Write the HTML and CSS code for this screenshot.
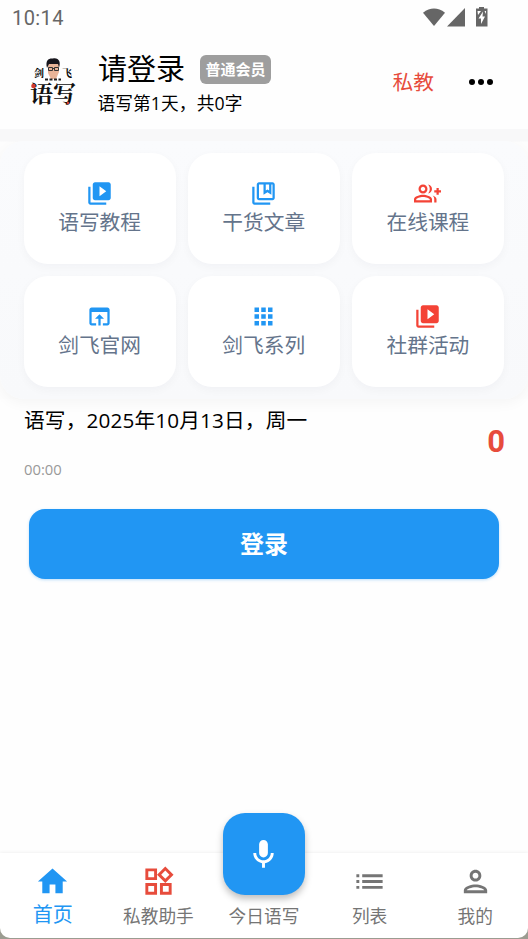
FILE: index.html
```html
<!DOCTYPE html>
<html lang="zh-CN">
<head>
<meta charset="utf-8">
<title>语写</title>
<link rel="stylesheet" href="styles.css">
</head>
<body>
<div class="app">
  <div class="status">
    <span class="clock">10:14</span>
    <svg class="status-icons" viewBox="0 0 66 20" width="66" height="20">
      <path d="M0 4.8Q11 -3.6 22 4.8L11 18z"/><path d="M42 0v18.500H24z"/>
      <path d="M56 -1h5v1.500h3.500v18H53V.5h3z"/>
      <path class="bolt" d="M60 3.500l-4.500 7h2.500V16l4-7.500h-2.500zM54.500 3h3.500L55 7zM61.500 3H63v3z"/>
    </svg>
  </div>
  <header class="header">
    <div class="logo">
      <div class="logo-top">
        <span>剑</span>
        <svg viewBox="0 0 18 24" width="18" height="24">
          <path fill="#e8b498" d="M4 8c0-6 11-6 11 0v6l-3 7H7l-3-6z"/>
          <path fill="#17151c" d="M3 10C1 2 5 0 9 .5c6-1 8 4 6 9L14 6 5 6z"/>
          <path fill="none" stroke="#333" stroke-width="1" d="M4.500 9.500h4v3h-4zm6 0h4v3h-4zm-2 1h2"/>
          <path fill="none" stroke="#222" stroke-width="2" stroke-dasharray="3 1.500" d="M1 21.500h16"/>
        </svg>
        <span>飞</span>
      </div>
      <div class="logo-name">语写</div>
      <svg class="logo-dots" viewBox="0 0 46 26" width="46" height="26"><circle cx="3.500" cy="3" r="2.300"/><circle cx="38" cy="20" r="1.300"/></svg>
    </div>
    <div class="user">
      <div class="user-line"><span class="user-name">请登录</span><span class="badge">普通会员</span></div>
      <div class="user-days">语写第1天，共0字</div>
    </div>
    <span class="coach">私教</span>
    <svg class="more" viewBox="0 0 24 6" width="24" height="6"><circle cx="3" cy="3" r="3"/><circle cx="12" cy="3" r="3"/><circle cx="21" cy="3" r="3"/></svg>
  </header>
  <div class="band">
  <section class="panel">
    <div class="card"><svg class="ico" viewBox="0 0 24 24"><path d="M4 6H2v14c0 1.1.9 2 2 2h14v-2H4V6zm16-4H8c-1.100 0-2 .9-2 2v12c0 1.100.9 2 2 2h12c1.100 0 2-.9 2-2V4c0-1.100-.9-2-2-2zm-8 12.500v-9l6 4.500-6 4.500z"/></svg><span>语写教程</span></div>
    <div class="card"><svg class="ico" viewBox="0 0 24 24"><path fill-rule="evenodd" d="M4 6H2v14c0 1.100.9 2 2 2h14v-2H4zM20 2H8c-1.100 0-2 .9-2 2v12c0 1.100.9 2 2 2h12c1.100 0 2-.9 2-2V4c0-1.100-.9-2-2-2zM8 16V4h4v9l3.500-2.200L19 13V4h1v12zM14 4h3v5.400l-1.500-1-1.500 1z"/></svg><span>干货文章</span></div>
    <div class="card"><svg class="ico red" viewBox="0 0 24 24"><path d="M22 9V7h-2v2h-2v2h2v2h2v-2h2V9zM8 12c2.210 0 4-1.790 4-4s-1.790-4-4-4-4 1.790-4 4 1.790 4 4 4zm0-6c1.100 0 2 .9 2 2s-.9 2-2 2-2-.9-2-2 .9-2 2-2zm0 7c-2.670 0-8 1.340-8 4v3h16v-3c0-2.660-5.330-4-8-4zm6 5H2v-.990C2.200 16.290 5.300 15 8 15s5.800 1.290 6 2v1zM12.510 4.050C13.430 5.110 14 6.490 14 8s-.57 2.890-1.490 3.950C14.470 11.700 16 10.040 16 8s-1.530-3.700-3.490-3.950zm4.020 9.780C17.420 14.660 18 15.700 18 17v3h2v-3c0-1.450-1.590-2.510-3.470-3.170z"/></svg><span>在线课程</span></div>
    <div class="card"><svg class="ico" viewBox="0 0 24 24"><path d="M19 4H5c-1.110 0-2 .9-2 2v12c0 1.100.89 2 2 2h4v-2H5V8h14v10h-4v2h4c1.100 0 2-.9 2-2V6c0-1.100-.89-2-2-2zm-7 6l-4 4h3v6h2v-6h3l-4-4z"/></svg><span>剑飞官网</span></div>
    <div class="card"><svg class="ico" viewBox="0 0 24 24"><path d="M4 8h4V4H4zm6 12h4v-4h-4zm-6 0h4v-4H4zm0-6h4v-4H4zm6 0h4v-4h-4zm6-10v4h4V4zm-6 4h4V4h-4zm6 6h4v-4h-4zm0 6h4v-4h-4z"/></svg><span>剑飞系列</span></div>
    <div class="card"><svg class="ico red" viewBox="0 0 24 24"><path d="M4 6H2v14c0 1.100.9 2 2 2h14v-2H4V6zm16-4H8c-1.100 0-2 .9-2 2v12c0 1.100.9 2 2 2h12c1.100 0 2-.9 2-2V4c0-1.100-.9-2-2-2zm-8 12.500v-9l6 4.500-6 4.500z"/></svg><span>社群活动</span></div>
  </section>
  </div>
  <section class="today">
    <div><div class="date">语写，2025年10月13日，周一</div><div class="time">00:00</div></div>
    <div class="count">0</div>
  </section>
  <button class="login">登录</button>
  <div class="bottom">
  <nav class="nav">
    <div class="tab active"><svg viewBox="0 0 24 24"><path d="M10 20v-6h4v6h5v-8h3L12 3 2 12h3v8z"/></svg><span>首页</span></div>
    <div class="tab coach-tab"><svg viewBox="0 0 24 24"><path d="M16.660 4.520l2.830 2.830-2.830 2.830-2.830-2.830 2.830-2.830M9 5v4H5V5h4m10 10v4h-4v-4h4M9 15v4H5v-4h4m7.660-13.310L11 7.340 16.660 13l5.660-5.660-5.660-5.650zM11 3H3v8h8V3zm10 10h-8v8h8v-8zm-10 0H3v8h8v-8z"/></svg><span>私教助手</span></div>
    <div class="tab mic-tab"><div class="fab"><svg viewBox="0 0 24 24"><path d="M12 14c1.660 0 3-1.340 3-3V5c0-1.660-1.340-3-3-3S9 3.340 9 5v6c0 1.660 1.340 3 3 3zm5-3c0 2.760-2.240 5-5 5s-5-2.240-5-5H5c0 3.530 2.610 6.430 6 6.920V21h2v-3.080c3.390-.49 6-3.390 6-6.920h-2z"/></svg></div><span>今日语写</span></div>
    <div class="tab"><svg viewBox="0 0 24 24"><path d="M3 13h2v-2H3zm0 4h2v-2H3zm0-8h2V7H3zm4 4h14v-2H7zm0 4h14v-2H7zM7 7v2h14V7z"/></svg><span>列表</span></div>
    <div class="tab"><svg viewBox="0 0 24 24"><path d="M12 6c1.100 0 2 .9 2 2s-.9 2-2 2-2-.9-2-2 .9-2 2-2m0 10c2.700 0 5.800 1.290 6 2H6c.23-.72 3.310-2 6-2m0-12C9.790 4 8 5.790 8 8s1.790 4 4 4 4-1.790 4-4-1.790-4-4-4zm0 10c-2.670 0-8 1.340-8 4v2h16v-2c0-2.660-5.330-4-8-4z"/></svg><span>我的</span></div>
  </nav>
  </div>
</div>
</body>
</html>
```
FILE: styles.css
```css
* { box-sizing: border-box; }
body { margin: 0; background: #fefefe; color: #000; font-family: "Open Sans", "Noto Sans CJK SC", sans-serif; font-weight: 375; }
svg { display: block; flex: none; fill: currentColor; overflow: visible; }
.app { width: 528px; height: 939px; display: flex; flex-direction: column; overflow: hidden; }
.status { height: 36px; display: flex; justify-content: space-between; align-items: center; padding: 0 39px 0 12px; color: #666; }
.status-icons { margin-top: -1px; }
.clock { font: 400 20px/36px Roboto, sans-serif; letter-spacing: .4px; }
.bolt { fill: #fff; }
.header { height: 93px; display: flex; align-items: center; padding: 0 35px 0 30px; }
.logo { position: relative; width: 46px; align-self: flex-start; margin-top: 22px; font-family: "Noto Serif CJK SC", "Noto Sans CJK SC", serif; }
.logo-dots { position: absolute; left: 0; top: 25px; fill: #d33a2c; }
.logo-top { display: flex; align-items: flex-start; justify-content: center; height: 22px; font-size: 10px; line-height: 11px; font-weight: bold; }
.logo-top span { padding-top: 9px; }
.logo-name { font-size: 23px; line-height: 24px; margin-top: 1px; font-weight: 700; color: #111; }
.user { margin-left: 22px; flex: 1; align-self: flex-start; }
.user-line { display: flex; align-items: center; height: 44px; margin-top: 11px; }
.user-name { font-size: 29px; line-height: 44px; }
.badge { margin: 1px 0 0 15px; width: 71px; height: 29px; border-radius: 6px; background: #9e9e9e; color: #fff; font-size: 15px; font-weight: 700; line-height: 28px; text-align: center; white-space: nowrap; }
.user-days { font-size: 17.700px; line-height: 25px; margin-left: -.5px; letter-spacing: .1px; }
.coach { color: #e74c3c; font-size: 20.700px; line-height: 30px; margin: -2px 35px 0 0; }
.more { margin-top: -1px; }
.band { background: linear-gradient(#f8f8f9 12px, #fdfdfd 13px, #fdfdfd 100%); padding-top: 12px; }
.panel { height: 258px; border-radius: 24px; background: linear-gradient(#fafbfd, #f8f9fb); box-shadow: 0 4px 14px rgba(0,0,0,.04); padding: 12px 24px 12px 23.500px; display: grid; grid-template-columns: repeat(3, 1fr); grid-template-rows: 111px 111px; gap: 12px; clip-path: inset(0 0 -20px 0); }
.card { background: #fff; border-radius: 24px; box-shadow: 0 3px 10px rgba(30,40,60,.035); display: flex; flex-direction: column; align-items: center; padding-top: 27px; color: #64748b; font-size: 20.700px; line-height: 28px; }
.card span { margin-top: 1px; }
.ico { width: 27px; height: 27px; color: #2196f3; }
.ico.red { color: #f44336; }
.today { height: 110px; padding: 0 24px; display: flex; justify-content: space-between; }
.date { font-size: 20.700px; line-height: 30px; margin-top: 6px; letter-spacing: .15px; }
.time { font-size: 14.800px; font-weight: 400; line-height: 20px; color: #999; margin-top: 24px; }
.count { color: #e74c3c; font: 700 31px/40px Roboto, sans-serif; margin: 23px -1px 0 0; }
.login { height: 70px; flex: none; margin: 0 29px; padding: 0 0 3px; border: 0; border-radius: 16px; background: #2196f3; color: #fff; font: 700 24px "Noto Sans CJK SC", sans-serif; box-shadow: 0 1px 3px rgba(33,150,243,.3); }
.bottom { margin-top: auto; background: #9b9c91; padding-bottom: 1px; box-shadow: 0 -1px 3px rgba(0,0,0,.05); }
.nav { height: 85px; background: #fff; border-radius: 0 0 10px 10px; display: grid; grid-template-columns: repeat(5, 1fr); }
.tab { display: flex; flex-direction: column; align-items: center; color: #757575; font-size: 17.700px; line-height: 26px; padding-top: 11px; }
.tab svg { width: 35px; height: 35px; }
.tab span { margin-top: 4px; white-space: nowrap; }
.active { color: #2196f3; font-size: 20px; }
.active span { margin-top: 3px; }
.coach-tab svg { color: #e74c3c; }
.mic-tab { padding-top: 0; }
.fab { width: 82px; height: 82px; margin-top: -40px; border-radius: 22px; background: #2196f3; color: #fff; display: grid; place-items: center; box-shadow: 0 4px 7px rgba(0,0,0,.25); }
.mic-tab span { margin-top: 8px; }
```
